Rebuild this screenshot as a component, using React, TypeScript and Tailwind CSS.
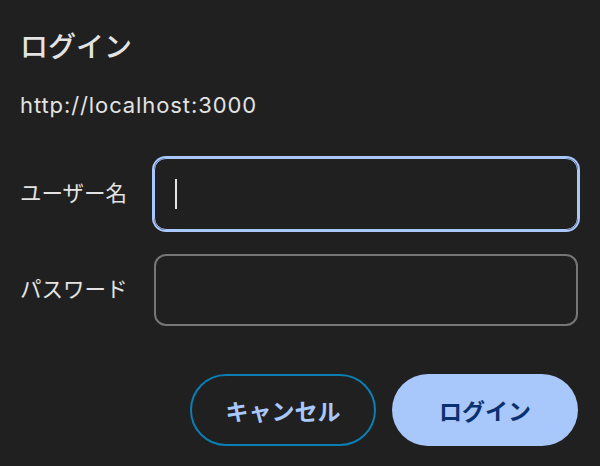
import React from "react";

const jp = { fontFamily: '"Noto Sans CJK JP", "Noto Sans", sans-serif' };

const App = () => {
    return (
        <div
            className="w-[600px] h-[466px] bg-[#202020] text-[#e3e3e3] pl-5 pr-[22px] pt-[27px] flex flex-col"
            style={jp}
        >
            <h1 className="text-[28px] leading-[36px] font-medium">ログイン</h1>
            <p
                className="mt-[28px] text-[22px] leading-[28px] tracking-[0.9px]"
                style={{ fontFamily: '"Inter", "Liberation Sans", sans-serif' }}
            >
                http://localhost:3000
            </p>

            <div className="mt-[39px] grid grid-cols-[134px_1fr] gap-y-6 items-center">
                <label className="text-[21.5px] leading-[28px] -mt-1">ユーザー名</label>
                <div className="h-[72px] rounded-xl border border-[#a8c7fa] ring-2 ring-[#a8c7fa] flex items-center pl-[20px]">
                    <span className="block w-[2px] h-[30px] bg-[#e3e3e3]"></span>
                </div>

                <label className="text-[21.5px] leading-[28px] -mt-1">パスワード</label>
                <div className="h-[72px] rounded-xl border-2 border-[#767676]"></div>
            </div>

            <div className="mt-12 flex justify-end gap-4">
                <button className="w-[186px] h-[72px] rounded-full border-2 border-[#0b7eb4] text-[#a8c7fa] text-[23px] font-bold">
                    キャンセル
                </button>
                <button className="w-[186px] h-[72px] rounded-full bg-[#a8c7fa] text-[#0a3070] text-[23px] font-bold">
                    ログイン
                </button>
            </div>
        </div>
    );
};

export default App;
